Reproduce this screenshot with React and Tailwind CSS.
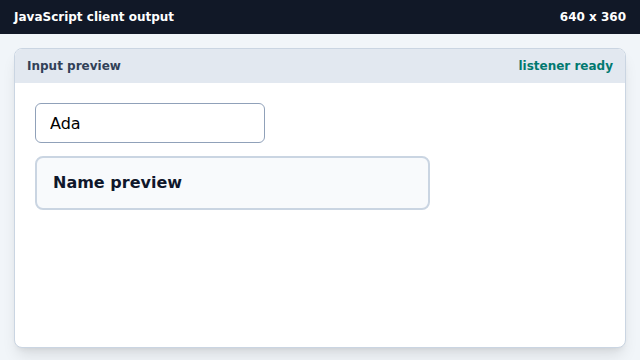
export default function App() {
  return (
    <div className="flex h-[360px] w-[640px] flex-col bg-slate-100 font-['DejaVu_Sans',sans-serif]">
      <div className="flex h-[34px] shrink-0 items-center justify-between bg-[#111827] px-[14px] text-[12px] font-bold text-white">
        <span>JavaScript client output</span>
        <span>640 x 360</span>
      </div>
      <div className="flex flex-1 flex-col px-[14px] pt-[14px] pb-[12px]">
        <div className="flex flex-1 flex-col overflow-hidden rounded-lg border border-slate-300 bg-white shadow-lg">
          <div className="flex h-[34px] shrink-0 items-center justify-between bg-slate-200 px-3 text-[12px] font-bold">
            <span className="text-slate-700">Input preview</span>
            <span className="text-teal-700">listener ready</span>
          </div>
          <div className="flex flex-col gap-[13px] p-5">
            <input
              defaultValue="Ada"
              className="h-10 w-[230px] rounded-md border border-slate-400 bg-white px-[14px] text-base text-black outline-none"
            />
            <div className="flex h-[54px] w-[395px] items-center rounded-lg border-2 border-slate-300 bg-slate-50 px-4 text-base font-bold text-slate-900">
              Name preview
            </div>
          </div>
        </div>
      </div>
    </div>
  );
}
